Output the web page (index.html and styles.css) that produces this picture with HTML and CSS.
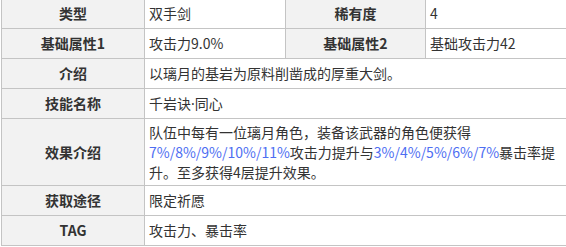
FILE: index.html
```html
<!DOCTYPE html>
<html lang="zh-CN">
<head>
<meta charset="utf-8">
<link rel="stylesheet" href="styles.css">
</head>
<body>
<table class="info">
  <colgroup>
    <col class="c1"><col class="c2"><col class="c3"><col class="c4">
  </colgroup>
  <tr>
    <th>类型</th><td>双手剑</td>
    <th>稀有度</th><td>4</td>
  </tr>
  <tr>
    <th>基础属性1</th><td>攻击力9.0%</td>
    <th>基础属性2</th><td>基础攻击力42</td>
  </tr>
  <tr>
    <th>介绍</th><td colspan="3">以璃月的基岩为原料削凿成的厚重大剑。</td>
  </tr>
  <tr>
    <th>技能名称</th><td colspan="3">千岩诀<span class="dot">·</span>同心</td>
  </tr>
  <tr class="multi">
    <th>效果介绍</th>
    <td colspan="3">队伍中每有一位璃月角色，装备该武器的角色便获得<br><span class="num">7%/8%/9%/10%/11%</span>攻击力提升与<span class="num">3%/4%/5%/6%/7%</span>暴击率提<br>升。至多获得4层提升效果。</td>
  </tr>
  <tr>
    <th>获取途径</th><td colspan="3">限定祈愿</td>
  </tr>
  <tr>
    <th>TAG</th><td colspan="3">攻击力、暴击率</td>
  </tr>
</table>
</body>
</html>
```

FILE: styles.css
```css
html, body {
  margin: 0;
  padding: 0;
  overflow: hidden;
  background: #ffffff;
}
.info {
  border-collapse: collapse;
  table-layout: fixed;
  width: 570px;
  margin: -2px 0 0 1px;
  font-family: "Microsoft YaHei", "Noto Sans CJK SC", "Noto Sans", sans-serif;
  font-size: 14px;
  line-height: 21px;
  color: #333333;
}
.c1 { width: 143px; }
.c2 { width: 141px; }
.c3 { width: 140px; }
.c4 { width: 146px; }
.info th, .info td {
  border: 1px solid #c4c4c4;
  padding: 4px 4px 4px 4px;
  vertical-align: middle;
}
.info th {
  background: #f2f2f2;
  font-weight: bold;
  text-align: center;
  color: #333333;
}
.info td {
  background: #ffffff;
  text-align: left;
}
.multi td, .multi th {
  line-height: 20px;
  padding-top: 3px;
  padding-bottom: 3px;
}
.dot {
  font-family: "Noto Sans", sans-serif;
}
.num {
  color: #4e6ef2;
}
```
